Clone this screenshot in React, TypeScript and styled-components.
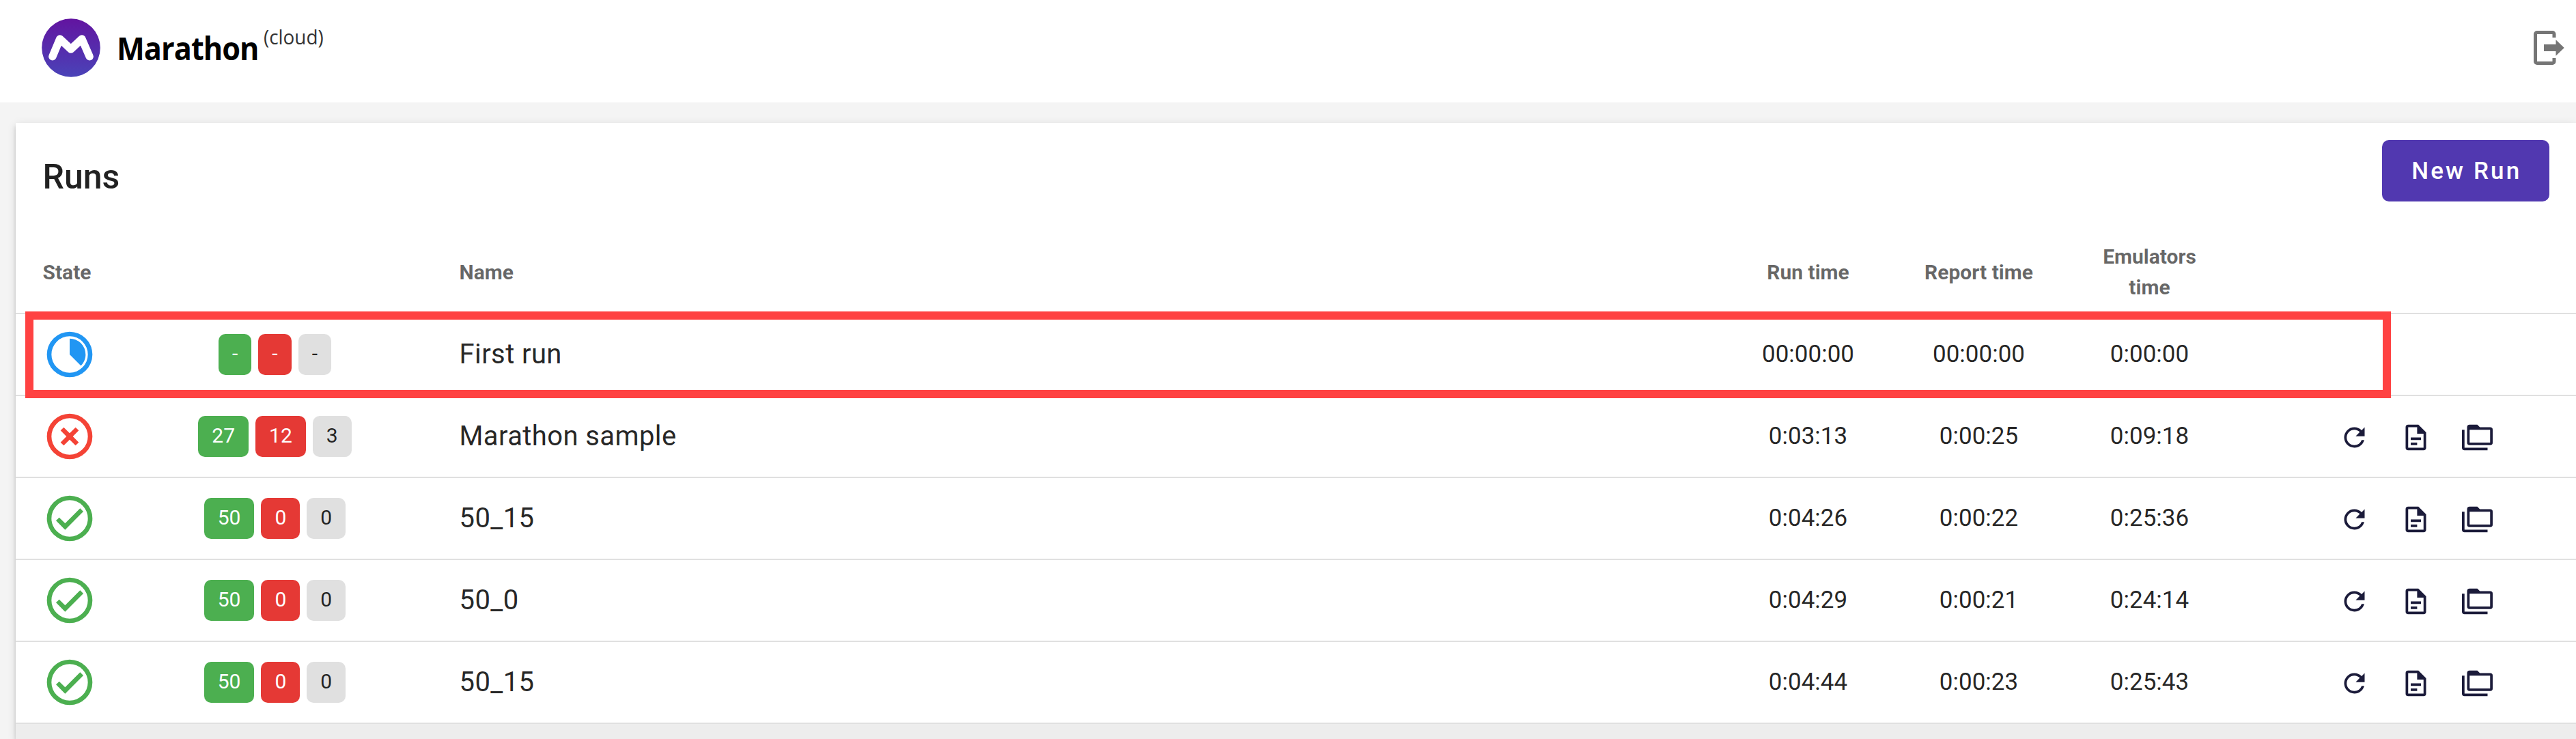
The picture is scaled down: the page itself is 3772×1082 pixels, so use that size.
import React from "react";
import styled, { createGlobalStyle } from "styled-components";

const GlobalStyle = createGlobalStyle`
  *, *::before, *::after { box-sizing: border-box; }
  html, body { margin: 0; background: #f4f4f4; overflow: hidden; }
  body { font-family: Roboto, "Liberation Sans", sans-serif; color: rgba(0, 0, 0, 0.87); }
`;

const Page = styled.div`
  height: 1082px;
  overflow: hidden;
  display: flex;
  flex-direction: column;
`;

const Header = styled.header`
  flex: none;
  height: 150px;
  padding: 0 7px 11px 60.5px;
  background: #fff;
  display: flex;
  align-items: center;
  justify-content: space-between;
`;

const Brand = styled.div`
  display: flex;
  align-items: center;
`;

const Wordmark = styled.div`
  display: flex;
  align-items: flex-start;
  margin-left: 24px;
  font-family: "Open Sans", "Noto Sans", sans-serif;
  white-space: nowrap;
`;

const BrandName = styled.span`
  width: 215px;
  color: #000;
  font-size: 46px;
  font-weight: 700;
  line-height: 84px;
  letter-spacing: -1px;
  transform: scaleX(0.94);
  transform-origin: 0 50%;
`;

const BrandTag = styled.span`
  color: #333;
  font-size: 29px;
  line-height: 52px;
  transform: scaleX(0.96);
  transform-origin: 0 50%;
`;

const Card = styled.main`
  flex: 1;
  margin: 30px 0 0 22.5px;
  background: #ededed;
  box-shadow:
    0 7.5px 2.5px -5px rgba(0, 0, 0, 0.2),
    0 5px 5px 0 rgba(0, 0, 0, 0.14),
    0 2.5px 12.5px 0 rgba(0, 0, 0, 0.12);
`;

const TitleBar = styled.div`
  height: 158px;
  padding: 25px 39.5px 0 40px;
  background: #fff;
  display: flex;
  align-items: flex-start;
  justify-content: space-between;
`;

const Title = styled.h1`
  margin: 14px 0 0;
  font-size: 50px;
  font-weight: 500;
  line-height: 80px;
`;

const NewRunButton = styled.button`
  width: 244.5px;
  height: 90px;
  padding: 1px 0 0 3px;
  border: 0;
  border-radius: 10px;
  background: #5138b0;
  color: #fff;
  font: 500 35px/90px Roboto, "Liberation Sans", sans-serif;
  letter-spacing: 3.125px;
`;

const Row = styled.div<{ $tall?: boolean }>`
  position: relative;
  display: grid;
  grid-template-columns: 150px 460px 1fr 250px 250px 250px 499.5px;
  align-items: center;
  height: ${(p) => (p.$tall ? 122 : 120)}px;
  background: #fff;
  border-bottom: 2px solid #e0e0e0;
`;

const HeadCell = styled.div<{ $center?: boolean }>`
  padding: 0 40px;
  color: rgba(0, 0, 0, 0.6);
  font-size: 30px;
  font-weight: 700;
  line-height: 45px;
  text-align: ${(p) => (p.$center ? "center" : "left")};
`;

const StateCell = styled.div`
  display: flex;
  padding-left: 39.5px;
`;

const BadgeCell = styled.div`
  display: flex;
  justify-content: center;
  gap: 10px;
`;

const badgeTones = {
  passed: { background: "#4caf50", color: "#fff" },
  failed: { background: "#e53935", color: "#fff" },
  ignored: { background: "#e0e0e0", color: "rgba(0, 0, 0, 0.87)" },
};

const Badge = styled.span<{ $tone: keyof typeof badgeTones }>`
  height: 60px;
  padding: 0 20px;
  border-radius: 10px;
  background: ${(p) => badgeTones[p.$tone].background};
  color: ${(p) => badgeTones[p.$tone].color};
  font-size: 30px;
  line-height: 58px;
`;

const NameCell = styled.div`
  padding: 0 40px;
  font-size: 40px;
  line-height: 60px;
  letter-spacing: 0.4px;
`;

const TimeCell = styled.div`
  font-size: 35px;
  line-height: 50px;
  text-align: center;
`;

const Actions = styled.div`
  display: flex;
  gap: 45px;
  padding: 2px 0 0 152.5px;
`;

const Highlight = styled.div`
  position: absolute;
  z-index: 1;
  left: 14.5px;
  top: -4.5px;
  width: 3464px;
  height: 127px;
  border: 12px solid #ff4242;
`;

const Glyph = styled.svg<{ $size: number; $color: string }>`
  display: block;
  flex: none;
  width: ${(p) => p.$size}px;
  height: ${(p) => p.$size}px;
  fill: ${(p) => p.$color};
`;

const ring = "M12,2A10,10 0 1,0 12,22A10,10 0 1,0 12,2M12,20A8,8 0 1,1 12,4A8,8 0 1,1 12,20";

const stateIcons = {
  running: { color: "#2196f3", path: "M12,5A7,7 0 0,1 19,12C19,13.93 18.2,15.68 16.95,16.95L12,12V5Z" },
  failed: {
    color: "#f44336",
    path: "M14.59,8L12,10.59L9.41,8L8,9.41L10.59,12L8,14.59L9.41,16L12,13.41L14.59,16L16,14.59L13.41,12L16,9.41L14.59,8Z",
  },
  passed: { color: "#4caf50", path: "M16.59,7.58L10,14.17L7.41,11.59L6,13L10,17L18,9L16.59,7.58Z" },
};

const actionIcons = [
  "M17.65,6.35C16.2,4.9 14.21,4 12,4A8,8 0 0,0 4,12A8,8 0 0,0 12,20C15.73,20 18.84,17.45 19.73,14H17.65C16.83,16.33 14.61,18 12,18A6,6 0 0,1 6,12A6,6 0 0,1 12,6C13.66,6 15.14,6.69 16.22,7.78L13,11H20V4L17.65,6.35Z",
  "M6,2A2,2 0 0,0 4,4V20A2,2 0 0,0 6,22H18A2,2 0 0,0 20,20V8L14,2H6M6,4H13V9H18V20H6V4M8,12V14H16V12H8M8,16V18H13V16H8Z",
  "M22,4A2,2 0 0,1 24,6V16A2,2 0 0,1 22,18H6A2,2 0 0,1 4,16V4A2,2 0 0,1 6,2H12L14,4H22M2,6V20H20V22H2A2,2 0 0,1 0,20V6H2M6,6V16H22V6H6Z",
];

const logoutPath =
  "M15,16.7V14H8V10H15V7.3L19.9,12ZM13,2A2,2 0 0,1 15,4V6H13V4H4V20H13V18H15V20A2,2 0 0,1 13,22H4A2,2 0 0,1 2,20V4A2,2 0 0,1 4,2Z";

type Run = {
  state: keyof typeof stateIcons;
  counts: [string, string, string];
  name: string;
  times: [string, string, string];
};

const runs: Run[] = [
  { state: "running", counts: ["-", "-", "-"], name: "First run", times: ["00:00:00", "00:00:00", "0:00:00"] },
  { state: "failed", counts: ["27", "12", "3"], name: "Marathon sample", times: ["0:03:13", "0:00:25", "0:09:18"] },
  { state: "passed", counts: ["50", "0", "0"], name: "50_15", times: ["0:04:26", "0:00:22", "0:25:36"] },
  { state: "passed", counts: ["50", "0", "0"], name: "50_0", times: ["0:04:29", "0:00:21", "0:24:14"] },
  { state: "passed", counts: ["50", "0", "0"], name: "50_15", times: ["0:04:44", "0:00:23", "0:25:43"] },
];

function Logo() {
  return (
    <svg width="86" height="86" viewBox="0 0 86 86">
      <defs>
        <linearGradient id="logoFill" x1="0" y1="0" x2="0" y2="1">
          <stop offset="0" stopColor="#6214a0" />
          <stop offset="1" stopColor="#4a43b8" />
        </linearGradient>
      </defs>
      <circle cx="43" cy="43" r="42.8" fill="url(#logoFill)" />
      <path
        d="M15.9 55.8L26.7 30L42.8 45L58.9 30L70.1 55.8"
        fill="none"
        stroke="#fff"
        strokeWidth="11.4"
        strokeLinecap="round"
        strokeLinejoin="round"
      />
    </svg>
  );
}

function RunRow({ run }: { run: Run }) {
  const icon = stateIcons[run.state];
  const running = run.state === "running";
  return (
    <Row>
      <StateCell>
        <Glyph $size={80} $color={icon.color} viewBox="0 0 24 24">
          <path d={ring} fillRule="evenodd" />
          <path d={icon.path} />
        </Glyph>
      </StateCell>
      <BadgeCell>
        <Badge $tone="passed">{run.counts[0]}</Badge>
        <Badge $tone="failed">{run.counts[1]}</Badge>
        <Badge $tone="ignored">{run.counts[2]}</Badge>
      </BadgeCell>
      <NameCell>{run.name}</NameCell>
      {run.times.map((time, i) => (
        <TimeCell key={i}>{time}</TimeCell>
      ))}
      {!running && (
        <Actions>
          {actionIcons.map((d) => (
            <Glyph key={d} $size={45} $color="#1b1b3a" viewBox="0 0 24 24">
              <path d={d} />
            </Glyph>
          ))}
        </Actions>
      )}
      {running && <Highlight />}
    </Row>
  );
}

export default function App() {
  return (
    <Page>
      <GlobalStyle />
      <Header>
        <Brand>
          <Logo />
          <Wordmark>
            <BrandName>Marathon</BrandName>
            <BrandTag>(cloud)</BrandTag>
          </Wordmark>
        </Brand>
        <Glyph $size={60} $color="#757575" viewBox="0 0 24 24">
          <path d={logoutPath} />
        </Glyph>
      </Header>
      <Card>
        <TitleBar>
          <Title>Runs</Title>
          <NewRunButton>New Run</NewRunButton>
        </TitleBar>
        <Row $tall>
          <HeadCell>State</HeadCell>
          <HeadCell />
          <HeadCell>Name</HeadCell>
          <HeadCell $center>Run time</HeadCell>
          <HeadCell $center>Report time</HeadCell>
          <HeadCell $center>Emulators time</HeadCell>
        </Row>
        {runs.map((run, i) => (
          <RunRow key={i} run={run} />
        ))}
      </Card>
    </Page>
  );
}
